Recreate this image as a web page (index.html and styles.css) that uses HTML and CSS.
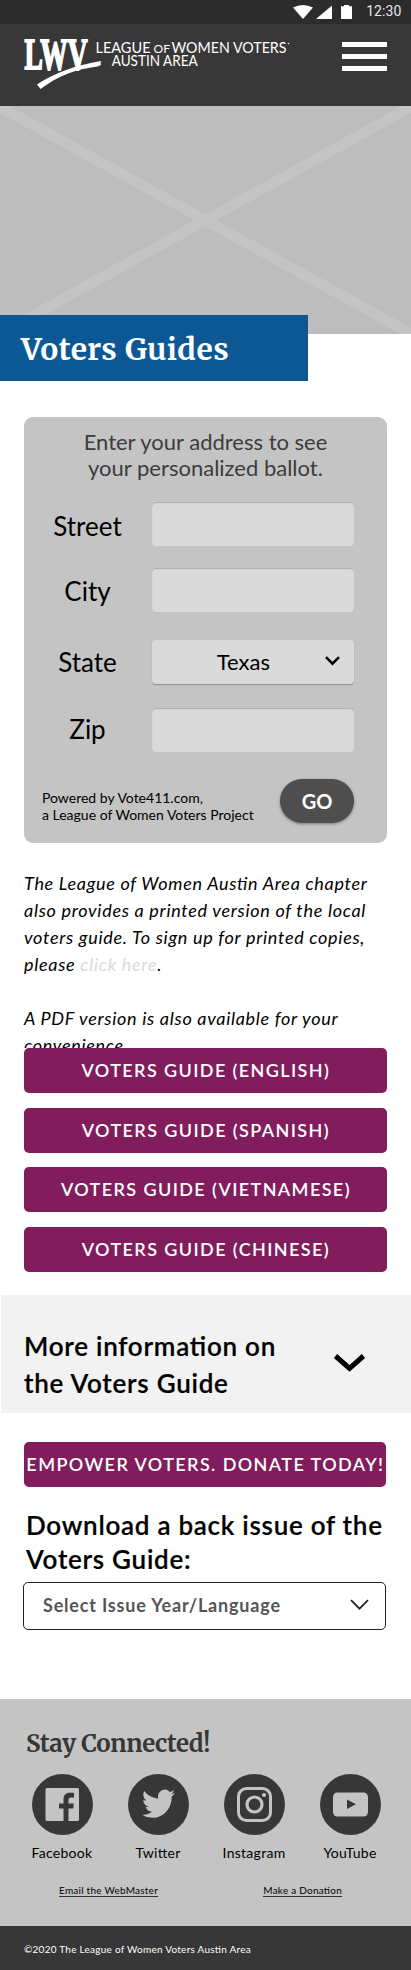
FILE: index.html
```html
<!DOCTYPE html>
<html lang="en">
<head>
<meta charset="utf-8">
<meta name="viewport" content="width=device-width, initial-scale=1">
<title>Voters Guides – League of Women Voters Austin Area</title>
<link rel="stylesheet" href="styles.css">
</head>
<body>
<div class="statusbar">
  <svg class="status-icons" width="60" height="14" viewBox="0 0 60 14" fill="#fff">
    <path d="M0 2.6Q10-2.6 20 2.6L10 14Z"/>
    <path d="M23 14H39V0.5Z"/>
    <path d="M48 1.2h3V0h5v1.2h3V14H48Z"/>
  </svg>
  <span class="clock">12:30</span>
</div>
<header class="header">
  <svg class="logo" width="270" height="52" viewBox="0 0 270 52" fill="#fff" role="img" aria-label="League of Women Voters Austin Area">
    <text class="logo-mark" x="0.500" y="29.500" textLength="63" lengthAdjust="spacingAndGlyphs">LWV</text>
    <path d="M13 45.500C32 33 52 26.500 77 22l-.5 3.300 1 .5-4 1.700C52 30 34 37 16.500 50Z"/>
    <g class="logo-name">
      <text x="71.500" y="13.600" textLength="55" lengthAdjust="spacingAndGlyphs">LEAGUE</text>
      <text class="small" x="129.500" y="13.600" textLength="16.500" lengthAdjust="spacingAndGlyphs">OF</text>
      <text x="147.500" y="13.600" textLength="115" lengthAdjust="spacingAndGlyphs">WOMEN VOTERS</text>
      <text x="87.700" y="27.200" textLength="86" lengthAdjust="spacingAndGlyphs">AUSTIN AREA</text>
      <circle cx="264.500" cy="4.500" r=".8"/>
    </g>
  </svg>
  <button class="menu" aria-label="Menu"><i></i><i></i><i></i></button>
</header>
<section class="hero">
  <svg class="hero-cross" width="411" height="228" viewBox="0 0 411 228" stroke="#c4c4c4" stroke-width="10.500">
    <path d="M-4-1.500L415 230M415-1.500L-4 230"/>
  </svg>
  <h1 class="page-title">Voters Guides</h1>
</section>
<main>
  <form class="card">
    <p class="card-lead">Enter your address to see<br>your personalized ballot.</p>
    <div class="field street"><label>Street</label><input class="box" type="text"></div>
    <div class="field city"><label>City</label><input class="box" type="text"></div>
    <div class="field state"><label>State</label>
      <div class="box dropdown"><span>Texas</span>
        <svg width="15" height="10" viewBox="0 0 15 10" fill="none" stroke="#000" stroke-width="2.500"><path d="M1 1.200l6.500 6.500L14 1.200"/></svg>
      </div>
    </div>
    <div class="field zip"><label>Zip</label><input class="box" type="text"></div>
    <div class="card-foot">
      <p>Powered by Vote411.com,<br>a League of Women Voters Project</p>
      <button class="go" type="button">GO</button>
    </div>
  </form>
  <div class="intro">
    <p>The League of Women Austin Area chapter<br>also provides a printed version of the local<br>voters guide. To sign up for printed copies,<br>please <a>click here</a>.</p>
    <p>A PDF version is also available for your<br>convenience.</p>
  </div>
  <nav class="guides">
    <a class="btn">VOTERS GUIDE (ENGLISH)</a>
    <a class="btn">VOTERS GUIDE (SPANISH)</a>
    <a class="btn">VOTERS GUIDE (VIETNAMESE)</a>
    <a class="btn">VOTERS GUIDE (CHINESE)</a>
  </nav>
  <section class="more">
    <h2>More information on<br>the Voters Guide</h2>
    <svg width="31" height="18" viewBox="0 0 31 18" fill="none" stroke="#000" stroke-width="5"><path d="M1.500 2L15.500 14.300 29.500 2"/></svg>
  </section>
  <a class="btn donate">EMPOWER VOTERS. DONATE TODAY!</a>
  <section class="archive">
    <h2>Download a back issue of the<br>Voters Guide:</h2>
    <div class="select"><span>Select Issue Year/Language</span>
      <svg width="19" height="12" viewBox="0 0 19 12" fill="none" stroke="#222" stroke-width="1.700"><path d="M1 1.200l8.500 8.500L18 1.200"/></svg>
    </div>
  </section>
</main>
<footer>
  <div class="connect">
    <h3>Stay Connected!</h3>
    <div class="social">
      <a><svg width="61" height="61" viewBox="0 0 61 61"><circle cx="30.500" cy="30.500" r="30.500" fill="#373737"/><path fill="#c4c4c4" d="M15 14h30.500a1.500 1.500 0 0 1 1.500 1.500v30a1.500 1.500 0 0 1-1.500 1.500H36.500V34.500h4.800l.5-5h-5.300v-3.300c0-1.800.8-2.700 2.800-2.700h2.700v-4.700h-4c-4.500 0-6.500 2.500-6.500 6.500v4.200H27v5h4.500V47H15a1.500 1.500 0 0 1-1.500-1.500v-30A1.500 1.500 0 0 1 15 14Z"/></svg><span>Facebook</span></a>
      <a><svg width="61" height="61" viewBox="0 0 61 61"><circle cx="30.500" cy="30.500" r="30.500" fill="#373737"/><path fill="#c4c4c4" transform="translate(14 12.500) scale(1.375 1.440)" d="M23.950 4.570a10 10 0 0 1-2.820.77 4.960 4.960 0 0 0 2.160-2.720c-.95.550-2 .950-3.120 1.180a4.920 4.920 0 0 0-8.390 4.480C7.690 8.090 4.070 6.130 1.640 3.160a4.920 4.920 0 0 0 1.520 6.570 4.900 4.900 0 0 1-2.230-.61v.06a4.920 4.920 0 0 0 3.950 4.830 5 5 0 0 1-2.210.08 4.940 4.940 0 0 0 4.600 3.420A9.870 9.870 0 0 1 0 19.540a14 14 0 0 0 7.550 2.210c9.050 0 14-7.500 14-13.980 0-.210 0-.420-.020-.630a9.940 9.940 0 0 0 2.460-2.550Z"/></svg><span>Twitter</span></a>
      <a><svg width="61" height="61" viewBox="0 0 61 61"><circle cx="30.500" cy="30.500" r="30.500" fill="#373737"/><g fill="none" stroke="#c4c4c4"><rect x="14.500" y="14.500" width="32" height="32" rx="8" stroke-width="3"/><circle cx="30.500" cy="30.500" r="7.500" stroke-width="3.200"/></g><circle cx="40" cy="21" r="2.100" fill="#c4c4c4"/></svg><span>Instagram</span></a>
      <a><svg width="61" height="61" viewBox="0 0 61 61"><circle cx="30.500" cy="30.500" r="30.500" fill="#373737"/><rect x="13" y="18.500" width="35" height="24" rx="4.500" fill="#c4c4c4"/><path d="M27 25.500v9.500l9-4.750Z" fill="#373737"/></svg><span>YouTube</span></a>
    </div>
    <div class="links"><a>Email the WebMaster</a><a>Make a Donation</a></div>
  </div>
  <p class="copyright">©2020 The League of Women Voters Austin Area</p>
</footer>
</body>
</html>
```
FILE: styles.css
```css
* { box-sizing: border-box; margin: 0; padding: 0; }
body { width: 411px; background: #fff; color: #000; font-family: Lato, sans-serif; font-feature-settings: "liga" 1; white-space: nowrap; }
svg { display: block; flex: none; overflow: visible; }
button { border: 0; font: inherit; }

.statusbar { height: 24px; padding: 0 9.500px 0 0; background: #2c2c2c; display: flex; justify-content: flex-end; align-items: flex-start; }
.status-icons { margin: 5px 13px 0 0; }
.clock { font: 400 14px/23px Roboto, sans-serif; letter-spacing: .1px; color: #e6e6e6; }

.header { height: 82px; padding: 15px 24px 0; background: #383838; display: flex; justify-content: space-between; align-items: flex-start; }
.logo-mark { font: 700 44px "Liberation Serif", serif; stroke: #fff; stroke-width: 1.900px; }
.logo-name { font: 400 14.800px Lato, sans-serif; }
.logo-name .small { font-size: 11.500px; }
.menu { width: 45px; margin-top: 3px; background: none; display: grid; gap: 7px; }
.menu i { height: 5px; background: #fff; }

.hero { height: 228px; background: #bdbdbd; display: flex; align-items: flex-end; position: relative; }
.hero-cross { position: absolute; inset: 0; overflow: hidden; }
.page-title { position: relative; width: 308px; height: 66px; margin-bottom: -47px; padding-left: 21px; background: #0b5894; color: #fff; font: 700 30px/68px Merriweather, "DejaVu Serif Condensed", serif; letter-spacing: .48px; }

.card { margin: 83px 24px 0; height: 426px; padding: 12px 33px 0 18px; background: #c4c4c4; border-radius: 9px; }
.card-lead { margin: 0 -15px 21px 0; text-align: center; color: #3c3c3c; font-size: 22px; line-height: 26px; }
.field { display: flex; justify-content: space-between; align-items: flex-start; }
.field label { width: 91px; text-align: center; font-size: 26px; line-height: 48px; height: 44px; }
.city { margin-top: 22px; }
.state { margin-top: 28px; }
.zip { margin-top: 24px; }
.field.city label { line-height: 46px; }
.field.state label { line-height: 44px; }
.field.zip label { line-height: 42px; }
.box { width: 202px; height: 44px; border: 0; border-radius: 4px; background: #dadada; box-shadow: inset 0 1px 1px #aaa; }
.dropdown { display: flex; align-items: center; justify-content: flex-end; padding: 0 14px 2px 0; font-size: 22px; box-shadow: 0 1px 1px #8c8c8c; }
.dropdown span { margin-right: 55px; }
.card-foot { display: flex; justify-content: space-between; margin-top: 27px; }
.card-foot p { font-size: 14px; line-height: 17px; padding-top: 10px; }
.go { width: 74px; height: 44px; border-radius: 22px; background: #4e4e4e; color: #fff; font-size: 20px; font-weight: 700; box-shadow: 0 1px 3px #777; }

.intro { height: 205px; padding: 27px 24px 0; overflow: hidden; font-size: 18px; line-height: 27px; font-style: italic; letter-spacing: .7px; }
.intro p + p { margin-top: 27px; }
.intro a { color: #dadada; }

.btn { display: block; height: 45px; border-radius: 5px; background: #811d5d; color: #fff; text-align: center; font-size: 18px; font-weight: 600; line-height: 44px; letter-spacing: 1.400px; text-indent: .8px; }
.guides { padding: 0 24px; display: grid; row-gap: 14.700px; }

.more { height: 118px; margin: 23px 0 0 1px; padding: 33px 46px 0 23px; background: #f2f2f2; display: flex; justify-content: space-between; }
.more h2 { font-size: 26px; font-weight: 600; line-height: 37px; letter-spacing: .75px; -webkit-text-stroke: .2px #000; }
.more svg { margin-top: 26px; }
.donate { margin: 29px 25px 0 24px; }
.archive { padding: 21px 25px 0 23px; }
.archive h2 { padding-left: 3px; font-size: 26px; font-weight: 600; line-height: 34px; letter-spacing: .73px; -webkit-text-stroke: .2px #000; }
.select { height: 48px; margin-top: 6px; padding: 0 16px 2px 19px; border: 1px solid #222; border-radius: 5px; display: flex; justify-content: space-between; align-items: center; color: #555; font-size: 18px; font-weight: 700; letter-spacing: .81px; }

footer { margin-top: 69px; }
.connect { height: 227px; background: #c4c4c4; padding: 27px 27px 0 26px; }
.connect h3 { color: #373737; font: 700 24px/36px Merriweather, "DejaVu Serif Condensed", serif; letter-spacing: -.35px; }
.social { display: grid; grid-template-columns: repeat(4, 96px); margin: 12px 0 0 -12px; }
.social a { display: grid; justify-items: center; font-size: 14px; letter-spacing: .28px; line-height: 17px; row-gap: 9px; }
.links { display: flex; justify-content: space-between; padding: 23px 42px 0 33px; font-size: 10px; line-height: 12px; }
.links a { border-bottom: 1px solid #333; letter-spacing: .24px; }
.copyright { height: 44px; padding-left: 24px; background: #373737; color: #fff; font-size: 10px; line-height: 46px; letter-spacing: .25px; }
```
